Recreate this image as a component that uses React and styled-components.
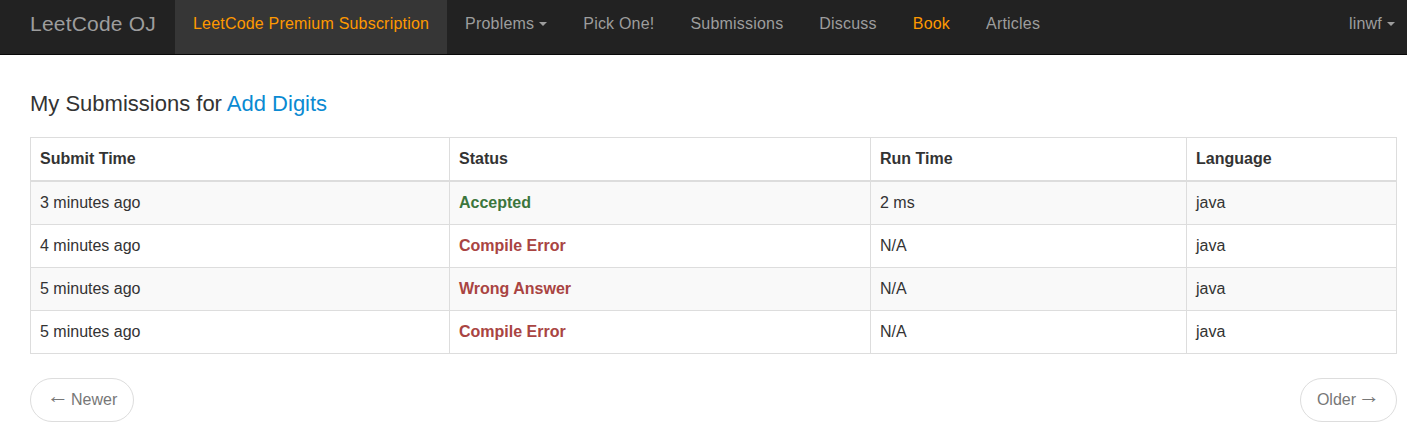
import React from "react";
import styled, { createGlobalStyle } from "styled-components";

const GlobalStyle = createGlobalStyle`
  body {
    margin: 0;
    background: #fff;
    font-family: "Liberation Sans", Arial, sans-serif;
    color: #333;
  }
`;

const submissions = [
  { time: "3 minutes ago", status: "Accepted", ok: true, run: "2 ms", lang: "java" },
  { time: "4 minutes ago", status: "Compile Error", ok: false, run: "N/A", lang: "java" },
  { time: "5 minutes ago", status: "Wrong Answer", ok: false, run: "N/A", lang: "java" },
  { time: "5 minutes ago", status: "Compile Error", ok: false, run: "N/A", lang: "java" },
];

function App() {
  return (
    <Page>
      <GlobalStyle />
      <Navbar>
        <NavLeft>
          <Brand href="#">LeetCode OJ</Brand>
          <NavLink href="#" $active $orange>LeetCode Premium Subscription</NavLink>
          <NavLink href="#">Problems <Caret /></NavLink>
          <NavLink href="#">Pick One!</NavLink>
          <NavLink href="#">Submissions</NavLink>
          <NavLink href="#">Discuss</NavLink>
          <NavLink href="#" $orange>Book</NavLink>
          <NavLink href="#">Articles</NavLink>
        </NavLeft>
        <UserLink href="#">linwf <Caret /></UserLink>
      </Navbar>

      <Container>
        <Title>
          My Submissions for <TitleLink href="#">Add Digits</TitleLink>
        </Title>

        <Table>
          <colgroup>
            <col style={{ width: 419 }} />
            <col style={{ width: 421 }} />
            <col style={{ width: 316 }} />
            <col />
          </colgroup>
          <thead>
            <tr>
              <Th>Submit Time</Th>
              <Th>Status</Th>
              <Th>Run Time</Th>
              <Th>Language</Th>
            </tr>
          </thead>
          <tbody>
            {submissions.map((s, i) => (
              <Row key={i} $striped={i % 2 === 0}>
                <Td>{s.time}</Td>
                <Td>
                  <Status $ok={s.ok}>{s.status}</Status>
                </Td>
                <Td>{s.run}</Td>
                <Td>{s.lang}</Td>
              </Row>
            ))}
          </tbody>
        </Table>

        <Pager>
          <PagerButton href="#"><Arrow>&larr;</Arrow> Newer</PagerButton>
          <PagerButton href="#">Older <Arrow>&rarr;</Arrow></PagerButton>
        </Pager>
      </Container>
    </Page>
  );
}

const Page = styled.div`
  min-height: 426px;
`;

const Navbar = styled.nav`
  display: flex;
  justify-content: space-between;
  align-items: stretch;
  height: 54px;
  background-color: #222;
  border-bottom: 1px solid #080808;
  padding: 0 12px 0 15px;
`;

const NavLeft = styled.div`
  display: flex;
  align-items: stretch;
`;

const Brand = styled.a`
  display: flex;
  align-items: center;
  padding: 0 19px 6px 15px;
  font-size: 21px;
  letter-spacing: 0.2px;
  color: #9d9d9d;
  text-decoration: none;
`;

const NavLink = styled.a`
  display: flex;
  align-items: center;
  padding: 0 18px 6px;
  font-size: 16px;
  letter-spacing: 0.2px;
  color: ${(p) => (p.$orange ? "#ff9900" : "#9d9d9d")};
  background-color: ${(p) => (p.$active ? "#363636" : "transparent")};
  text-decoration: none;
  white-space: nowrap;
`;

const UserLink = styled(NavLink)`
  padding: 0 0 6px;
`;

const Caret = styled.span`
  display: inline-block;
  width: 0;
  height: 0;
  margin-left: 5px;
  border-top: 4px solid #9d9d9d;
  border-left: 4px solid transparent;
  border-right: 4px solid transparent;
  vertical-align: middle;
`;

const Container = styled.main`
  padding: 0 10px 0 30px;
`;

const Title = styled.h3`
  margin: 36px 0 20px;
  font-size: 22px;
  font-weight: normal;
  line-height: 26px;
  color: #333;
`;

const TitleLink = styled.a`
  color: #0a8ad2;
  text-decoration: none;
`;

const Table = styled.table`
  width: 100%;
  border-collapse: collapse;
  border: 1px solid #ddd;
  font-size: 16px;
  table-layout: fixed;
`;

const Th = styled.th`
  text-align: left;
  font-weight: bold;
  padding: 8px 9px;
  line-height: 26px;
  border: 1px solid #ddd;
  border-bottom: 2px solid #ddd;
  color: #333;
`;

const Row = styled.tr`
  background-color: ${(p) => (p.$striped ? "#f9f9f9" : "#fff")};
`;

const Td = styled.td`
  padding: 8px 9px;
  line-height: 26px;
  border: 1px solid #ddd;
  color: #333;
`;

const Status = styled.strong`
  color: ${(p) => (p.$ok ? "#3c763d" : "#a94442")};
`;

const Pager = styled.div`
  display: flex;
  justify-content: space-between;
  margin-top: 24px;
`;

const PagerButton = styled.a`
  display: inline-flex;
  align-items: center;
  gap: 2px;
  height: 26px;
  padding: 8px 16px;
  font-size: 16px;
  color: #777;
  border: 1px solid #ddd;
  border-radius: 22px;
  background: #fff;
  text-decoration: none;
`;

const Arrow = styled.span`
  font-size: 22px;
  line-height: 1;
  transform: translateY(-4px);
`;

export default App;
